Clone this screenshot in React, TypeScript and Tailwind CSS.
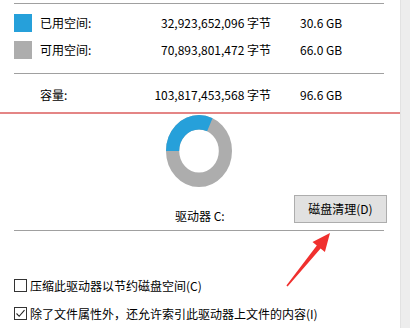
import React from "react";

const font = { fontFamily: '"Noto Sans CJK SC", "Microsoft YaHei", sans-serif' };

function Row({ swatch, label, bytes, gb }: { swatch?: string; label: string; bytes: string; gb: string }) {
  return (
    <div className="flex items-center h-[18px] pl-[14px] text-[12px] leading-[18px] text-black">
      {swatch ? (
        <div className={`w-[18px] h-[18px] ${swatch}`} />
      ) : (
        <div className="w-[18px] h-[18px]" />
      )}
      <div className="w-[110px] ml-[8px]">{label}</div>
      <div className="w-[121px] text-right whitespace-nowrap">{bytes}</div>
      <div className="ml-[29px] whitespace-nowrap">{gb}</div>
    </div>
  );
}

function Check({ checked, label }: { checked?: boolean; label: string }) {
  return (
    <div className="flex items-center h-[13px] pl-[14px] text-[12px] leading-[13px] text-black">
      <div className="w-[13px] h-[13px] border border-[#333333] bg-white flex items-center justify-center">
        {checked && (
          <svg width="11" height="11" viewBox="0 0 11 11">
            <path d="M1.5 5.5 L4.2 8.3 L9.5 2.2" fill="none" stroke="#222" strokeWidth="1.1" />
          </svg>
        )}
      </div>
      <div className="ml-[3px] whitespace-nowrap">{label}</div>
    </div>
  );
}

export default function App() {
  const c = 2 * Math.PI * 40;
  const used = 30.6 / 96.6;
  return (
    <div className="relative flex w-[410px] h-[328px] bg-white overflow-hidden" style={font}>
      <div className="w-[400px] flex flex-col">
        <div className="h-[1px] bg-[#a0a0a0] ml-[14px] mr-[16px] mt-[3px]" />
        <div className="mt-[10px]">
          <Row swatch="bg-[#26a0da]" label="已用空间:" bytes="32,923,652,096 字节" gb="30.6 GB" />
        </div>
        <div className="mt-[9px]">
          <Row swatch="bg-[#adadad]" label="可用空间:" bytes="70,893,801,472 字节" gb="66.0 GB" />
        </div>
        <div className="h-[1px] bg-[#a0a0a0] ml-[14px] mr-[16px] mt-[14px]" />
        <div className="mt-[12px]">
          <Row label="容量:" bytes="103,817,453,568 字节" gb="96.6 GB" />
        </div>
        <div className="h-[2px] bg-[#e48585] mt-[8px]" />
        <div className="mt-[1px] flex">
          <div className="ml-[166px] w-[66px] h-[72px]">
            <svg width="66" height="72" viewBox="0 0 100 100" preserveAspectRatio="none">
              <circle cx="50" cy="50" r="40" fill="none" stroke="#adadad" strokeWidth="20" />
              <circle
                cx="50"
                cy="50"
                r="40"
                fill="none"
                stroke="#26a0da"
                strokeWidth="20"
                strokeDasharray={`${c * used} ${c}`}
                transform="rotate(180 50 50)"
              />
            </svg>
          </div>
        </div>
        <div className="mt-[8px] flex items-start h-[28px]">
          <div className="ml-[175px] mt-[13px] text-[12px] leading-[16px] text-black whitespace-nowrap">驱动器 C:</div>
          <div className="ml-auto mr-[13px] w-[93px] h-[28px] bg-[#e1e1e1] border border-[#adadad] flex items-center justify-center text-[12px] text-black">
            磁盘清理(D)
          </div>
        </div>
        <div className="h-[1px] bg-[#a0a0a0] ml-[14px] mr-[16px] mt-[7px]" />
        <div className="mt-[48px]">
          <Check label="压缩此驱动器以节约磁盘空间(C)" />
        </div>
        <div className="mt-[15px]">
          <Check checked label="除了文件属性外，还允许索引此驱动器上文件的内容(I)" />
        </div>
      </div>
      <div className="flex-1 bg-[#ededed] border-l border-[#e2e2e2]" />
      <svg className="absolute left-0 top-0 pointer-events-none" width="410" height="328" viewBox="0 0 410 328">
        <polygon
          points="330,233 324.9,252 320.6,248.6 287.6,286.4 286.4,285.6 316.8,245.4 312.5,242"
          fill="#f0302e"
        />
      </svg>
    </div>
  );
}
